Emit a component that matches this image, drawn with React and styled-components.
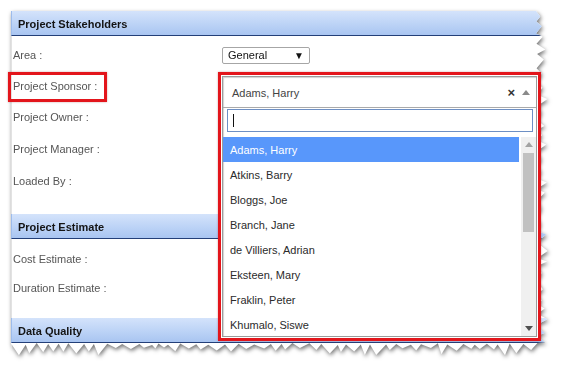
import React from "react";
import styled, { createGlobalStyle } from "styled-components";

const GlobalStyle = createGlobalStyle`
  html, body { margin: 0; padding: 0; background: #ffffff; }
  body { font-family: "Liberation Sans", Arial, sans-serif; }
  * { box-sizing: border-box; }
`;

const Page = styled.div`
  position: relative;
  width: 566px;
  height: 371px;
  padding: 11px 0 0 11px;
  overflow: hidden;
  background: #fff;
`;

const SheetShadow = styled.div`
  width: 537px;
  filter: drop-shadow(1px 2px 2px rgba(0, 0, 0, 0.55));
`;

const Sheet = styled.div`
  width: 537px;
  height: 345px;
  background: #fff;
  display: flex;
  flex-direction: column;
`;

const SectionHeader = styled.div`
  height: 25px;
  flex: 0 0 25px;
  display: flex;
  align-items: center;
  padding: 2px 0 0 6px;
  background: linear-gradient(to bottom, #d4e3fb 0%, #bcd3f6 55%, #a9c5f1 100%);
  border-left: 1px solid #9dbcec;
  border-bottom: 1px solid #233f78;
  font-weight: bold;
  font-size: 11px;
  color: #141414;
`;

const SectionBody = styled.div`
  display: flex;
  flex-direction: column;
  padding: ${(p) => p.$pad};
  border-left: 1px solid #e2e2e2;
`;

const Row = styled.div`
  height: ${(p) => p.$h}px;
  display: grid;
  grid-template-columns: 209px 1fr;
  align-items: center;
  padding-left: 1px;
`;

const Label = styled.div`
  font-size: 11px;
  color: #555;
`;

const NativeSelect = styled.div`
  width: 88px;
  height: 17px;
  border: 1px solid #a6a6a6;
  border-radius: 2px;
  display: flex;
  align-items: center;
  justify-content: space-between;
  padding: 0 5px 0 5px;
  font-size: 11px;
  color: #111;
  background: #fff;
`;

const Caret = styled.span`
  font-size: 10px;
  color: #111;
`;

/* annotations & overlay */
const Callout = styled.div`
  position: absolute;
  left: ${(p) => p.$x}px;
  top: ${(p) => p.$y}px;
  width: ${(p) => p.$w}px;
  height: ${(p) => p.$h}px;
  border: 3px solid #e3151b;
  box-shadow: 0 0 2px rgba(120, 0, 0, 0.35);
  pointer-events: none;
`;

const DropdownFrame = styled.div`
  position: absolute;
  left: 218px;
  top: 72px;
  width: 323px;
  height: 269px;
  border: 3px solid #e3151b;
  padding: 1px;
  background: #fff;
  display: flex;
  box-shadow: 0 0 2px rgba(120, 0, 0, 0.35);
`;

const Select2 = styled.div`
  flex: 1;
  border: 1px solid #9b9b9b;
  box-shadow: inset 1px 1px 1px rgba(0, 0, 0, 0.18);
  display: flex;
  flex-direction: column;
  background: #fff;
  min-height: 0;
`;

const Selection = styled.div`
  height: 31px;
  flex: 0 0 31px;
  display: flex;
  align-items: center;
  padding: 1px 6px 0 9px;
  border-bottom: 1px solid #aaa;
  font-size: 11px;
  color: #444;
`;

const SelectionText = styled.span`
  flex: 1;
`;

const Clear = styled.span`
  font-size: 13px;
  font-weight: bold;
  color: #333;
  margin-right: 7px;
  line-height: 1;
`;

const Arrow = styled.span`
  width: 0;
  height: 0;
  border-left: 4px solid transparent;
  border-right: 4px solid transparent;
  border-${(p) => (p.$down ? "top" : "bottom")}: 5px solid ${(p) => p.$color || "#8a8a8a"};
`;

const SearchWrap = styled.div`
  padding: 1px 3px 5px 4px;
  flex: 0 0 auto;
`;

const SearchBox = styled.div`
  height: 23px;
  border: 1px solid #6d8fc4;
  display: flex;
  align-items: center;
  padding-left: 5px;
`;

const CursorBar = styled.span`
  width: 1px;
  height: 13px;
  background: #111;
`;

const Results = styled.div`
  flex: 1;
  display: flex;
  min-height: 0;
  overflow: hidden;
`;

const List = styled.ul`
  list-style: none;
  margin: 0;
  padding: 0;
  flex: 1;
  overflow: hidden;
`;

const Item = styled.li`
  height: 25px;
  flex: 0 0 25px;
  display: flex;
  align-items: center;
  padding-left: 7px;
  font-size: 11px;
  color: ${(p) => (p.$active ? "#fff" : "#2b2b2b")};
  background: ${(p) => (p.$active ? "#5897fb" : "transparent")};
`;

const ScrollBar = styled.div`
  width: 15px;
  flex: 0 0 15px;
  margin-left: 2px;
  background: #f0f0f0;
  display: flex;
  flex-direction: column;
  align-items: center;
`;

const ScrollBtn = styled.div`
  height: 15px;
  flex: 0 0 15px;
  display: flex;
  align-items: center;
  justify-content: center;
`;

const Track = styled.div`
  flex: 1;
  width: 100%;
  padding: 1px 2px;
`;

const Thumb = styled.div`
  height: 79px;
  background: #c1c1c1;
`;

function tornClip(w, h, depthR, depthB) {
  let seed = 12345;
  const rnd = () => {
    seed = (seed * 9301 + 49297) % 233280;
    return seed / 233280;
  };
  const pts = [[0, 0], [w - depthR, 0]];
  let y = 0;
  let out = true;
  while (y < h - depthB) {
    y = Math.min(y + 3 + rnd() * 6, h - depthB);
    const x = out ? w - depthR + depthR * (0.35 + rnd() * 0.65) : w - depthR + rnd() * 2;
    pts.push([x, y]);
    out = !out;
  }
  let x = w - depthR;
  out = true;
  while (x > 0) {
    x = Math.max(x - (3 + rnd() * 7), 0);
    const yy = out ? h - depthB + depthB * (0.3 + rnd() * 0.7) : h - depthB + rnd() * 2;
    pts.push([x, yy]);
    out = !out;
  }
  pts.push([0, h - depthB]);
  return `polygon(${pts.map(([a, b]) => `${a.toFixed(1)}px ${b.toFixed(1)}px`).join(", ")})`;
}

const people = [
  "Adams, Harry",
  "Atkins, Barry",
  "Bloggs, Joe",
  "Branch, Jane",
  "de Villiers, Adrian",
  "Eksteen, Mary",
  "Fraklin, Peter",
  "Khumalo, Siswe",
];

export default function App() {
  const clip = tornClip(537, 345, 12, 13);
  return (
    <>
      <GlobalStyle />
      <Page>
        <SheetShadow>
          <Sheet style={{ clipPath: clip }}>
            <SectionHeader>Project Stakeholders</SectionHeader>
            <SectionBody $pad="4px 0 17px 0">
              <Row $h={30}>
                <Label>Area :</Label>
                <NativeSelect>
                  General <Caret>▼</Caret>
                </NativeSelect>
              </Row>
              <Row $h={31}>
                <Label>Project Sponsor :</Label>
              </Row>
              <Row $h={32}>
                <Label>Project Owner :</Label>
              </Row>
              <Row $h={32}>
                <Label>Project Manager :</Label>
              </Row>
              <Row $h={32}>
                <Label>Loaded By :</Label>
              </Row>
            </SectionBody>
            <SectionHeader>Project Estimate</SectionHeader>
            <SectionBody $pad="6px 0 16px 0">
              <Row $h={28}>
                <Label>Cost Estimate :</Label>
              </Row>
              <Row $h={29}>
                <Label>Duration Estimate :</Label>
              </Row>
            </SectionBody>
            <SectionHeader>Data Quality</SectionHeader>
          </Sheet>
        </SheetShadow>

        <Callout $x={8} $y={72} $w={99} $h={30} />

        <DropdownFrame>
          <Select2>
            <Selection>
              <SelectionText>Adams, Harry</SelectionText>
              <Clear>×</Clear>
              <Arrow />
            </Selection>
            <SearchWrap>
              <SearchBox>
                <CursorBar />
              </SearchBox>
            </SearchWrap>
            <Results>
              <List>
                {people.map((n, i) => (
                  <Item key={n} $active={i === 0}>
                    {n}
                  </Item>
                ))}
              </List>
              <ScrollBar>
                <ScrollBtn>
                  <Arrow $color="#a3a3a3" />
                </ScrollBtn>
                <Track>
                  <Thumb />
                </Track>
                <ScrollBtn>
                  <Arrow $down $color="#505050" />
                </ScrollBtn>
              </ScrollBar>
            </Results>
          </Select2>
        </DropdownFrame>
      </Page>
    </>
  );
}
